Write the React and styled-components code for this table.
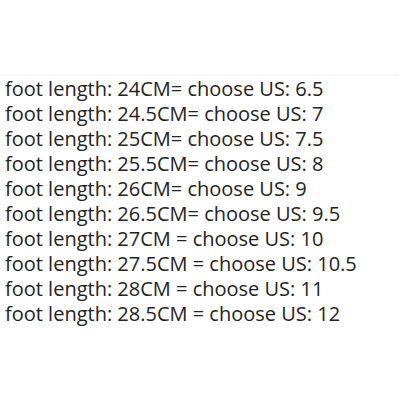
import React from "react";
import styled, { createGlobalStyle } from "styled-components";

const Global = createGlobalStyle`
  html, body { margin: 0; padding: 0; background: #ffffff; }
  body { width: 400px; height: 400px; overflow: hidden; }
`;

const Page = styled.div`
  width: 400px;
  height: 400px;
  background: #ffffff;
  padding-top: 74px;
  box-sizing: border-box;
`;

const Rule = styled.div`
  height: 2px;
  width: 399px;
  background: #f6f6f6;
`;

const List = styled.div`
  display: flex;
  flex-direction: column;
  padding-left: 5px;
`;

const Line = styled.div`
  font-family: "Open Sans", "Liberation Sans", sans-serif;
  font-size: 20px;
  line-height: 25px;
  color: #232323;
  white-space: nowrap;
`;

const rows = [
  "foot length: 24CM= choose US: 6.5",
  "foot length: 24.5CM= choose US: 7",
  "foot length: 25CM= choose US: 7.5",
  "foot length: 25.5CM= choose US: 8",
  "foot length: 26CM= choose US: 9",
  "foot length: 26.5CM= choose US: 9.5",
  "foot length: 27CM = choose US: 10",
  "foot length: 27.5CM = choose US: 10.5",
  "foot length: 28CM = choose US: 11",
  "foot length: 28.5CM = choose US: 12",
];

export default function App() {
  return (
    <Page>
      <Global />
      <Rule />
      <List>
        {rows.map((r) => (
          <Line key={r}>{r}</Line>
        ))}
      </List>
    </Page>
  );
}
